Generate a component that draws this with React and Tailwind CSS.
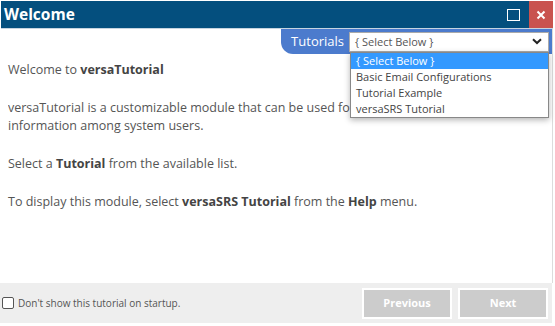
import { useState } from "react";

const options = [
  "{ Select Below }",
  "Basic Email Configurations",
  "Tutorial Example",
  "versaSRS Tutorial",
];

const App = () => {
  const [selected, setSelected] = useState(0);
  const [hideOnStartup, setHideOnStartup] = useState(false);

  return (
    <div
      className="w-[555px] h-[326px] bg-white flex flex-col overflow-hidden text-[#555]"
      style={{ fontFamily: '"Open Sans", "Noto Sans", sans-serif' }}
    >
      {/* Title bar */}
      <div className="h-[28px] mt-[1px] ml-[1px] mr-[2px] bg-[#044f7e] flex items-center border-b border-[#c6d4e0]">
        <div className="pl-[3px] text-white font-bold text-[15.5px] leading-none">
          Welcome
        </div>
        <div className="ml-auto flex items-stretch h-full">
          <button className="w-[24px] flex items-center justify-center mr-[4px]">
            <span className="block w-[13px] h-[12px] border-[1.5px] border-white" />
          </button>
          <button className="w-[24px] bg-[#c9534f] flex items-center justify-center text-white">
            <svg width="10" height="10" viewBox="0 0 10 10">
              <path d="M1.5 1.5 L8.5 8.5 M8.5 1.5 L1.5 8.5" stroke="white" strokeWidth="2" />
            </svg>
          </button>
        </div>
      </div>

      {/* Body */}
      <div className="flex-1 relative border-r border-[#dcdcdc] mr-[2px]">
        <div className="flex justify-end">
          <div className="h-[25px] bg-[#4c7bcd] rounded-bl-[12px] flex items-center pl-[10px] pr-[3px] gap-[5px]">
            <span className="text-white text-[13px] leading-none">Tutorials</span>
            <div className="relative">
              <div className="w-[200px] h-[20px] bg-white border border-[#aaa] flex items-center pl-[5px] pr-[6px]">
                <span className="text-[11px] leading-none text-[#555]">{options[selected]}</span>
                <svg className="ml-auto" width="10" height="7" viewBox="0 0 10 7">
                  <path d="M1 1.2 L5 5 L9 1.2" fill="none" stroke="#222" strokeWidth="2" />
                </svg>
              </div>
              {/* Open list */}
              <ul className="absolute left-[1px] top-[20px] w-[199px] bg-white border border-[#888] shadow-[0_2px_6px_rgba(0,0,0,0.3)] z-10">
                {options.map((opt, i) => (
                  <li
                    key={opt}
                    onClick={() => setSelected(i)}
                    className={`h-[16px] pl-[5px] text-[11px] leading-[16px] ${
                      i === selected ? "bg-[#3399ff] text-white" : "text-[#444]"
                    }`}
                  >
                    {opt}
                  </li>
                ))}
              </ul>
            </div>
          </div>
        </div>

        <div className="pl-[8px] pt-[7px] text-[12.5px] leading-[18px]">
          <p className="mb-[20px]">
            Welcome to <b className="text-[#444]">versaTutorial</b>
          </p>
          <p className="mb-[20px] w-[342px] overflow-hidden whitespace-nowrap">
            versaTutorial is a customizable module that can be used for sharing
            <br />
            information among system users.
          </p>
          <p className="mb-[20px]">
            Select a <b className="text-[#444]">Tutorial</b> from the available list.
          </p>
          <p>
            To display this module, select <b className="text-[#444]">versaSRS Tutorial</b> from the{" "}
            <b className="text-[#444]">Help</b> menu.
          </p>
        </div>
      </div>

      {/* Footer */}
      <div className="h-[40px] mb-[3px] mr-[3px] bg-[#eeeeee] flex items-center">
        <label className="flex items-center gap-[4px] pl-[2px] cursor-pointer">
          <input
            type="checkbox"
            checked={hideOnStartup}
            onChange={(e) => setHideOnStartup(e.target.checked)}
            className="appearance-none w-[12px] h-[12px] border border-[#555] rounded-[2px] bg-white"
          />
          <span className="text-[10px] text-[#555]">Don't show this tutorial on startup.</span>
        </label>
        <div className="ml-auto flex gap-[6px] pr-[4px]">
          <button className="w-[90px] h-[31px] bg-[#cccccc] border-2 border-white text-white font-bold text-[11px]">
            Previous
          </button>
          <button className="w-[90px] h-[31px] bg-[#cccccc] border-2 border-white text-white font-bold text-[11px]">
            Next
          </button>
        </div>
      </div>
    </div>
  );
};

export default App;
